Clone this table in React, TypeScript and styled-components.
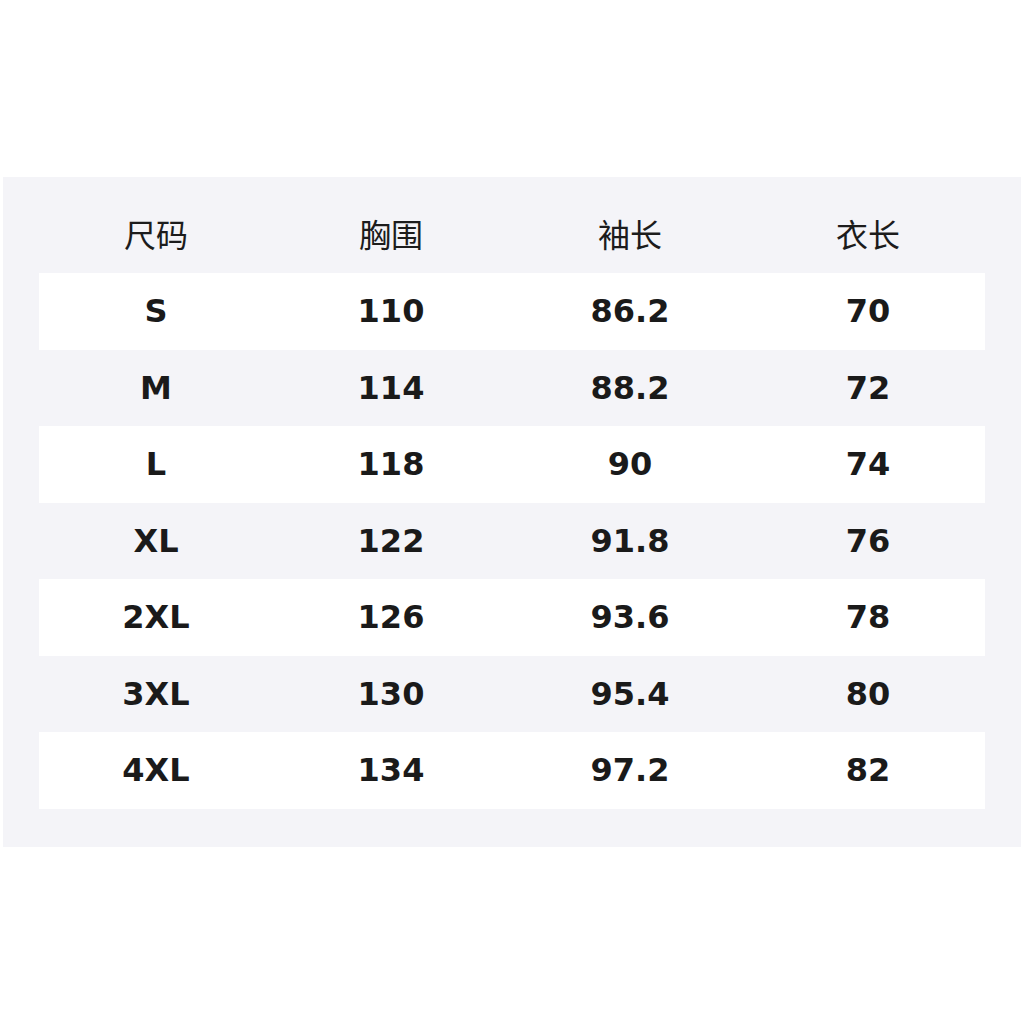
import React from 'react';
import styled, { createGlobalStyle } from 'styled-components';

const GlobalStyle = createGlobalStyle`
  html, body {
    margin: 0;
    padding: 0;
    background: #ffffff;
  }
  body {
    font-family: 'DejaVu Sans', 'Noto Sans CJK SC', sans-serif;
  }
`;

const arHeader: string[] = ['尺码', '胸围', '袖长', '衣长'];

const arRows: string[][] = [
  ['S', '110', '86.2', '70'],
  ['M', '114', '88.2', '72'],
  ['L', '118', '90', '74'],
  ['XL', '122', '91.8', '76'],
  ['2XL', '126', '93.6', '78'],
  ['3XL', '130', '95.4', '80'],
  ['4XL', '134', '97.2', '82'],
];

const App = () => {
  return (
    <Page>
      <GlobalStyle />
      <Panel>
        <HeaderRow>
          {arHeader.map((sTitle) => (
            <HeadCell key={sTitle}>{sTitle}</HeadCell>
          ))}
        </HeaderRow>
        {arRows.map((arRow, iIndex) => (
          <Row key={arRow[0]} bStriped={iIndex % 2 === 0}>
            {arRow.map((sValue, iCol) => (
              <Cell key={iCol}>{sValue}</Cell>
            ))}
          </Row>
        ))}
      </Panel>
    </Page>
  );
};

const Page = styled.div`
  padding: 177px 3px 0;
  height: 1024px;
  box-sizing: border-box;
`;

const Panel = styled.section`
  background: #f4f4f8;
  padding: 20px 36px 38px;
  display: flex;
  flex-direction: column;
`;

const HeaderRow = styled.div`
  display: grid;
  grid-template-columns: 234px 236px 242px 234px;
  height: 76px;
  align-items: center;
  padding-bottom: 4px;
  box-sizing: border-box;
`;

const HeadCell = styled.div`
  font-family: 'Noto Sans CJK SC', 'DejaVu Sans', sans-serif;
  font-weight: 400;
  font-size: 32px;
  color: #1c1c1c;
  text-align: center;
  line-height: 1;
`;

const Row = styled.div<{ bStriped: boolean }>`
  display: grid;
  grid-template-columns: 234px 236px 242px 234px;
  height: 76.5px;
  align-items: center;
  background: ${(props) => (props.bStriped ? '#ffffff' : 'transparent')};
`;

const Cell = styled.div`
  font-family: 'DejaVu Sans', sans-serif;
  font-weight: 700;
  font-size: 32px;
  color: #1a1a1a;
  text-align: center;
  line-height: 1;
`;

export default App;
